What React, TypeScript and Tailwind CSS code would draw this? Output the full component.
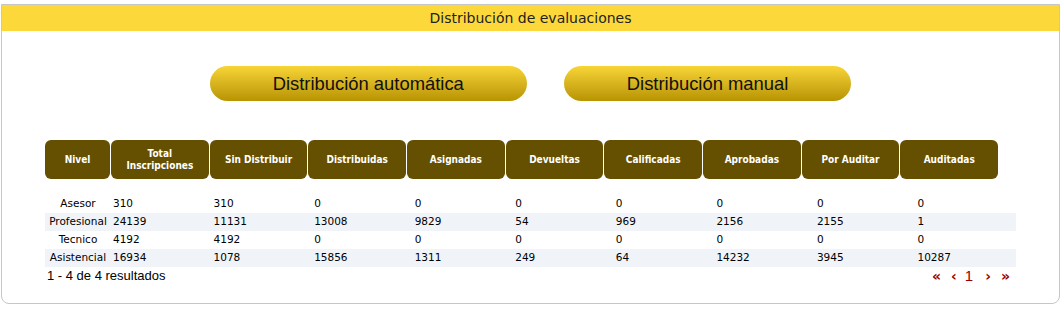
import React from 'react';

const columns = [
    'Total Inscripciones',
    'Sin Distribuir',
    'Distribuidas',
    'Asignadas',
    'Devueltas',
    'Calificadas',
    'Aprobadas',
    'Por Auditar',
    'Auditadas',
];

const rows: { nivel: string; values: number[] }[] = [
    { nivel: 'Asesor', values: [310, 310, 0, 0, 0, 0, 0, 0, 0] },
    { nivel: 'Profesional', values: [24139, 11131, 13008, 9829, 54, 969, 2156, 2155, 1] },
    { nivel: 'Tecnico', values: [4192, 4192, 0, 0, 0, 0, 0, 0, 0] },
    { nivel: 'Asistencial', values: [16934, 1078, 15856, 1311, 249, 64, 14232, 3945, 10287] },
];

export default function App() {
    return (
        <div className="pt-[4px] pl-[1px] bg-white">
            <div className="w-[1059px] h-[300px] border border-[#c6c6c6] rounded-b-[8px] bg-white flex flex-col">
                {/* Title bar */}
                <div className="h-[26px] bg-[#fdd83b] flex items-center justify-center text-[14px] text-[#222] font-['DejaVu_Sans',Verdana,sans-serif]">
                    Distribución de evaluaciones
                </div>

                {/* Actions */}
                <div className="mt-[35px] flex justify-center gap-[37px]">
                    {['Distribución automática', 'Distribución manual'].map(label => (
                        <button
                            key={label}
                            className="h-[35px] px-[63px] rounded-full bg-gradient-to-b from-[#f8d535] to-[#b89400] text-[18.4px] text-[#111] font-['Liberation_Sans',Arial,sans-serif]"
                        >
                            {label}
                        </button>
                    ))}
                </div>

                {/* Table */}
                <div className="ml-[43px] mt-[39px] w-[971px] font-['DejaVu_Sans',Verdana,sans-serif] text-[10.5px] text-black">
                    <div className="flex gap-px w-[953px] h-[39px] font-['DejaVu_Sans_Condensed','DejaVu_Sans',sans-serif] text-[10px]">
                        <div className="w-[65px] flex-none rounded-[6px] bg-[#654f00] text-white font-bold flex items-center justify-center">
                            Nivel
                        </div>
                        {columns.map(col => (
                            <div
                                key={col}
                                className="flex-1 rounded-[6px] bg-[#654f00] text-white font-bold flex items-center justify-center text-center leading-[12px] px-1"
                            >
                                {col === 'Total Inscripciones' ? (
                                    <span>Total<br />Inscripciones</span>
                                ) : (
                                    col
                                )}
                            </div>
                        ))}
                    </div>

                    <div className="mt-[16px]">
                        {rows.map((row, i) => (
                            <div
                                key={row.nivel}
                                className={`flex h-[18px] items-center ${i % 2 === 1 ? 'bg-[#f0f4f9]' : ''}`}
                            >
                                <div className="w-[66px] flex-none text-center">{row.nivel}</div>
                                {row.values.map((v, j) => (
                                    <div key={j} className="flex-1 pl-[2px]">{v}</div>
                                ))}
                            </div>
                        ))}
                    </div>

                    <div className="flex items-center justify-between h-[16px] mt-[1px] pr-[6px]">
                        <span className="pl-[2px] text-[13px] font-['Liberation_Sans',Arial,sans-serif]">
                            1 - 4 de 4 resultados
                        </span>
                        <div className="flex items-center text-[#9a0000] font-bold font-['DejaVu_Sans',sans-serif]">
                            <span className="text-[14px] mr-[10px]">«</span>
                            <span className="text-[14px] mr-[8px]">‹</span>
                            <span className="text-[15px] font-normal font-['Liberation_Sans',Arial,sans-serif] mr-[12px]">1</span>
                            <span className="text-[14px] mr-[10px]">›</span>
                            <span className="text-[14px]">»</span>
                        </div>
                    </div>
                </div>
            </div>
        </div>
    );
}
